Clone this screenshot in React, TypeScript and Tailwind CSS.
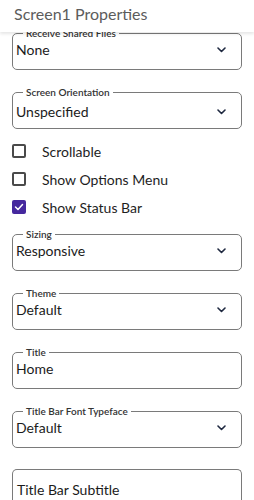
import React from 'react';

const font = { fontFamily: 'Lato, "Noto Sans", sans-serif' };

function Chevron() {
  return (
    <svg width="9" height="6" viewBox="0 0 9 6" className="shrink-0">
      <polyline points="1,1 4.5,4.5 8,1" fill="none" stroke="#1f2940" strokeWidth="1.6" strokeLinecap="round" strokeLinejoin="round" />
    </svg>
  );
}

function SelectField({ label, value, select = true }: { label: string; value: string; select?: boolean }) {
  return (
    <fieldset className="border border-[#7a7a7a] rounded-[5px] px-[3px] pb-[3px] h-[43px] min-w-0">
      <legend className="ml-[7px] px-[3px] text-[10px] leading-[12px] font-semibold text-[#333]">{label}</legend>
      <div className="flex items-center justify-between h-full pr-[12px]">
        <span className="text-[14px] text-[#1b1b1b]">{value}</span>
        {select && <Chevron />}
      </div>
    </fieldset>
  );
}

function Check({ label, checked = false }: { label: string; checked?: boolean }) {
  return (
    <div className="flex items-center h-[28px] gap-[16px]">
      {checked ? (
        <div className="w-[14px] h-[14px] rounded-[2px] bg-[#45289e] flex items-center justify-center">
          <svg width="10" height="8" viewBox="0 0 10 8">
            <polyline points="1.5,4 4,6.5 8.5,1.5" fill="none" stroke="#fff" strokeWidth="1.5" strokeLinecap="round" strokeLinejoin="round" />
          </svg>
        </div>
      ) : (
        <div className="w-[14px] h-[14px] rounded-[2px] border-2 border-[#4a4a4a]" />
      )}
      <span className="text-[14px] text-[#1e1e1e]">{label}</span>
    </div>
  );
}

export default function App() {
  return (
    <div className="w-[254px] h-[500px] bg-white flex flex-col overflow-hidden" style={font}>
      <div className="relative z-10 h-[32px] shrink-0 bg-white px-[14px] pt-[4px] text-[16px] leading-[20px] text-[#5c5c5c] shadow-[0_2px_3px_rgba(0,0,0,0.1)]">
        Screen1 Properties
      </div>

      <div className="flex-1 flex flex-col px-[12px] -mt-[5px]">
        <SelectField label="Receive Shared Files" value="None" />
        <div className="mt-[16px]">
          <SelectField label="Screen Orientation" value="Unspecified" />
        </div>

        <div className="mt-[8px] flex flex-col">
          <Check label="Scrollable" />
          <Check label="Show Options Menu" />
          <Check label="Show Status Bar" checked />
        </div>

        <div className="mt-[7px] flex flex-col gap-[16px]">
          <SelectField label="Sizing" value="Responsive" />
          <SelectField label="Theme" value="Default" />
          <SelectField label="Title" value="Home" select={false} />
          <SelectField label="Title Bar Font Typeface" value="Default" />
        </div>

        <div className="mt-[21px] border border-b-0 border-[#7a7a7a] rounded-t-[5px] h-[40px] px-[4px] pt-[9px] text-[14px] text-[#1b1b1b]">
          Title Bar Subtitle
        </div>
      </div>

      <div className="h-[4px] shrink-0 bg-[#3d4247] border-t border-[#cfd3d6]" />
    </div>
  );
}
